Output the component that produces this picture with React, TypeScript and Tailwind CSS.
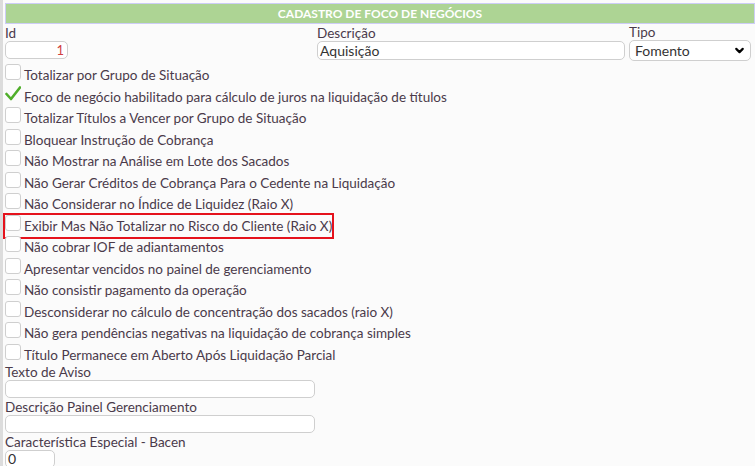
import React from "react"
import { ChevronDown } from "lucide-react"

type Opt = { label: string; checked?: boolean; marked?: boolean }

const options: Opt[] = [
  { label: "Totalizar por Grupo de Situação" },
  { label: "Foco de negócio habilitado para cálculo de juros na liquidação de títulos", checked: true },
  { label: "Totalizar Títulos a Vencer por Grupo de Situação" },
  { label: "Bloquear Instrução de Cobrança" },
  { label: "Não Mostrar na Análise em Lote dos Sacados" },
  { label: "Não Gerar Créditos de Cobrança Para o Cedente na Liquidação" },
  { label: "Não Considerar no Índice de Liquidez (Raio X)" },
  { label: "Exibir Mas Não Totalizar no Risco do Cliente (Raio X)", marked: true },
  { label: "Não cobrar IOF de adiantamentos" },
  { label: "Apresentar vencidos no painel de gerenciamento" },
  { label: "Não consistir pagamento da operação" },
  { label: "Desconsiderar no cálculo de concentração dos sacados (raio X)" },
  { label: "Não gera pendências negativas na liquidação de cobrança simples" },
  { label: "Título Permanece em Aberto Após Liquidação Parcial" },
]

function CheckRow({ label, checked, marked }: Opt) {
  return (
    <div className="relative flex h-[21.5px] items-center">
      {marked && (
        <div className="absolute left-[-2px] top-[-3px] h-[26px] w-[331px] border-[2.5px] border-[#e5121c]" />
      )}
      <div className="relative mt-[-7px] flex h-[16px] w-[16px] shrink-0 items-center justify-center">
        {checked ? (
          <svg viewBox="0 0 16 16" className="h-[17px] w-[17px]">
            <path d="M1.5 8.5 L6 13.5 L15 2" fill="none" stroke="#4fae2a" strokeWidth="2.6" strokeLinecap="round" strokeLinejoin="round" />
          </svg>
        ) : (
          <span className="block h-[16px] w-[16px] rounded-[3px] border border-[#cfcfcf] bg-white" />
        )}
      </div>
      <span className="ml-[3px] whitespace-nowrap">{label}</span>
    </div>
  )
}

export default function App() {
  return (
    <div className="min-h-screen border-l-[3px] border-[#dcdcdc] bg-[#fbfbfb] pl-[2px] pt-[3px] font-['Lato',sans-serif] text-[13.5px] leading-none text-[#4a3a4a]">
      <div className="flex h-[21px] items-center justify-center border border-[#cdcdf6] bg-[#add494] text-[12px] font-bold text-white">
        CADASTRO DE FOCO DE NEGÓCIOS
      </div>

      <div className="mt-[2px] flex">
        <div className="w-[312px]">
          <div className="flex h-[15px] items-center">Id</div>
          <div className="flex h-[18px] w-[63px] items-center justify-end rounded-[5px] border border-[#cfcfcf] bg-white px-[3px] text-[13px] text-[#d04040]">
            1
          </div>
        </div>
        <div className="w-[312px]">
          <div className="flex h-[15px] items-center">Descrição</div>
          <div className="flex h-[19px] w-[308px] items-center rounded-[5px] border border-[#cfcfcf] bg-white px-[2px] text-[14px] text-[#333]">
            Aquisição
          </div>
        </div>
        <div>
          <div className="flex h-[14px] items-center">Tipo</div>
          <div className="flex h-[21px] w-[122px] items-center justify-between rounded-[5px] border border-[#cfcfcf] bg-white pl-[5px] pr-[4px] text-[14px] text-[#333]">
            <span>Fomento</span>
            <ChevronDown size={13} strokeWidth={4} className="text-black" />
          </div>
        </div>
      </div>

      <div className="mt-[4px]">
        {options.map((o) => (
          <CheckRow key={o.label} {...o} />
        ))}
      </div>

      <div>
        <div className="flex h-[14px] items-center">Texto de Aviso</div>
        <div className="h-[18px] w-[310px] rounded-[5px] border border-[#cfcfcf] bg-white" />
        <div className="mt-[3px] flex h-[14px] items-center">Descrição Painel Gerenciamento</div>
        <div className="h-[18px] w-[310px] rounded-[5px] border border-[#cfcfcf] bg-white" />
        <div className="mt-[2px] flex h-[15px] items-center">Característica Especial - Bacen</div>
        <div className="flex h-[18px] w-[50px] items-center rounded-[5px] border border-[#cfcfcf] bg-white px-[2px] text-[14px] text-[#333]">
          0
        </div>
      </div>
    </div>
  )
}
